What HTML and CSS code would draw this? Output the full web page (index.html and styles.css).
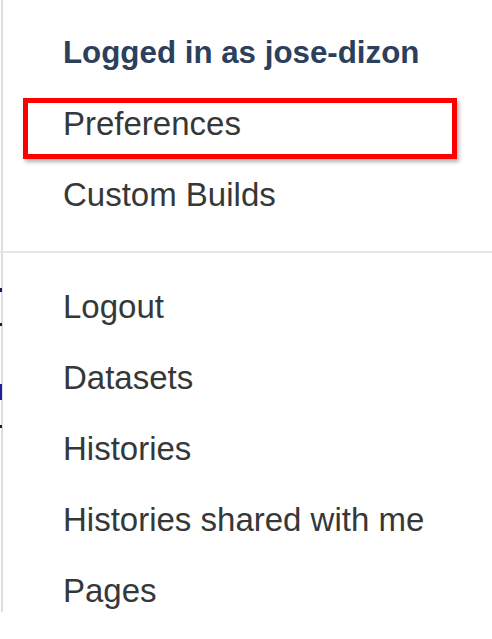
FILE: index.html
```html
<!DOCTYPE html>
<html>
<head>
<meta charset="utf-8">
<link rel="stylesheet" href="styles.css">
</head>
<body>
<div class="menu">
  <div class="edge-marks">
    <span class="mark m1"></span>
    <span class="mark m2"></span>
    <span class="mark m3"></span>
    <span class="mark m4"></span>
  </div>
  <div class="section top">
    <div class="item header">Logged in as jose-dizon</div>
    <div class="item highlighted">Preferences<span class="annot"></span></div>
    <div class="item">Custom Builds</div>
  </div>
  <div class="divider"></div>
  <div class="section bottom">
    <div class="item">Logout</div>
    <div class="item">Datasets</div>
    <div class="item">Histories</div>
    <div class="item">Histories shared with me</div>
    <div class="item">Pages</div>
  </div>
</div>
</body>
</html>
```
FILE: styles.css
```css
html, body {
  margin: 0;
  padding: 0;
  background: #ffffff;
}
body {
  font-family: "Liberation Sans", Arial, sans-serif;
  width: 492px;
  height: 639px;
  overflow: hidden;
}
.menu {
  position: relative;
  margin-left: 1px;
  height: 612px;
  border-left: 2px solid #dedede;
  display: flex;
  flex-direction: column;
}
.menu > * {
  flex-shrink: 0;
}
.section {
  display: flex;
  flex-direction: column;
}
.section > * {
  flex-shrink: 0;
}
.section.top {
  padding-top: 17px;
}
.section.bottom {
  padding-top: 18px;
}
.item {
  position: relative;
  height: 71px;
  line-height: 71px;
  padding-left: 60px;
  font-size: 33px;
  color: #353838;
  white-space: nowrap;
}
.item.header {
  font-weight: bold;
  font-size: 31.3px;
  color: #2c405c;
}
.divider {
  margin-top: 21px;
  height: 2px;
  background: #e6e6e6;
  margin-left: -3px;
}
.annot {
  position: absolute;
  left: 20px;
  top: 10px;
  width: 434px;
  height: 61px;
  box-sizing: border-box;
  border: 5px solid #ff0000;
  box-shadow: 2px 3px 4px rgba(0, 0, 0, 0.3);
}
.edge-marks {
  position: absolute;
  left: -3px;
  top: 0;
  width: 3px;
  height: 612px;
}
.mark {
  position: absolute;
  left: 0;
  width: 2px;
  background: #1a1a50;
}
.m1 { top: 288px; height: 4px; }
.m2 { top: 323px; height: 3px; }
.m3 { top: 384px; height: 16px; background: #1d1d9a; }
.m4 { top: 425px; height: 3px; }
```
